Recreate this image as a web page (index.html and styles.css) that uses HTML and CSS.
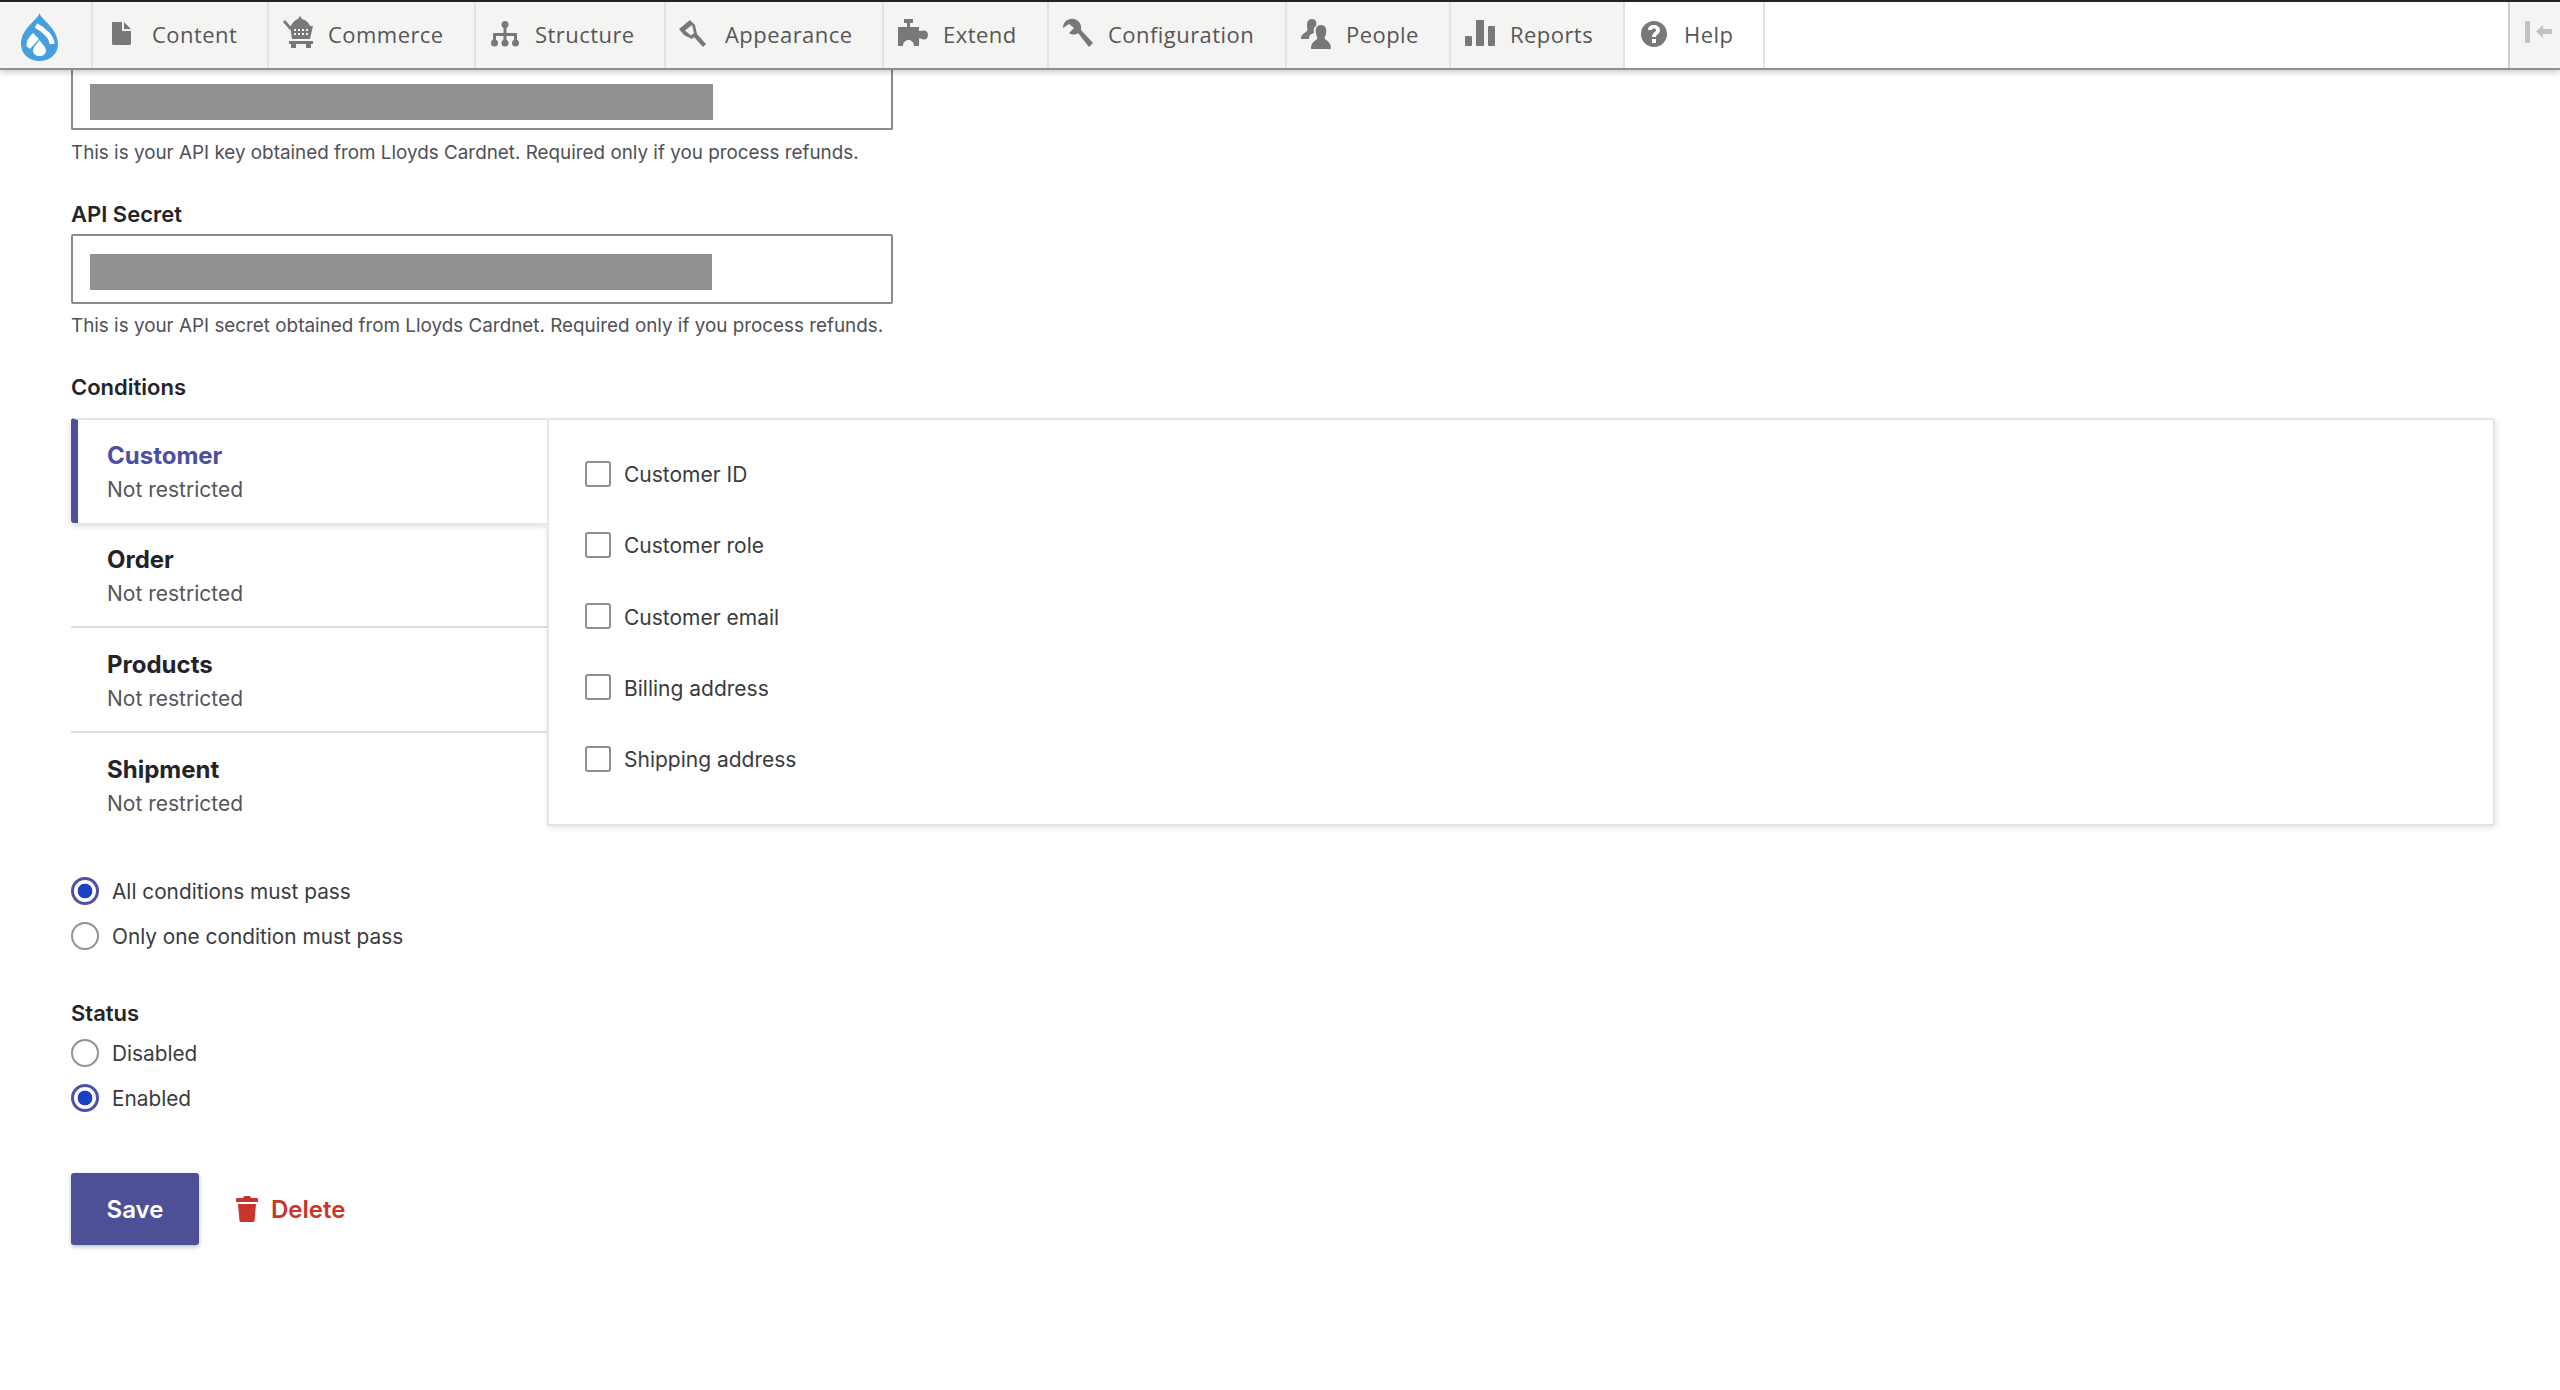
FILE: index.html
```html
<!DOCTYPE html>
<html lang="en">
<head>
<meta charset="utf-8">
<title>Payment gateway</title>
<link rel="stylesheet" href="styles.css">
</head>
<body>
<nav class="toolbar">
  <a class="logo"><svg width="37" height="48" viewBox="0 0 37 48"><path class="logo-drop" d="M18.500 0C20 7 37 15 37 31 37 41 29 48 18.500 48 8 48 0 41 0 31 0 15 17 7 18.500 0Z"/><path class="logo-line" d="M15 12.500C24 17 31 25 31 31"/><path class="logo-inner" d="M12 20L18 26 9 36 5.500 33C5 28 8 24 12 20Z"/><path class="logo-inner" d="M18.500 27C21 31 25 34 25 37.500 25 41 22 43 18.500 43 15 43 12 41 12 37.500 12 34 16 31 18.500 27Z"/></svg></a>
  <a class="tab tab-content"><svg class="ico" viewBox="0 0 30 30"><path d="M5 3H15V12H24V24.500Q24 26 22.500 26H6.500Q5 26 5 24.500ZM17 3L24 10H17Z"/></svg>Content</a>
  <a class="tab tab-commerce"><svg class="ico" viewBox="0 0 30 30"><path fill-rule="evenodd" d="M17 -3L19 0C23 1 26 4 27 7H8C9 4 12 1 15 0ZM7 7H30L27 20H9ZM11 10V12H13V10ZM15 10V12H17V10ZM19 10V12H21V10ZM23 10V12H25V10ZM11 14V16H13V14ZM15 14V16H17V14ZM19 14V16H21V14ZM23 14V16H25V14Z"/><path d="M0 3L2 1 9 9 7 11Z"/><path d="M6 22H30V25H6Z"/><path d="M8 25H13V29H8ZM23 25H28V29H23Z"/></svg>Commerce</a>
  <a class="tab tab-structure"><svg class="ico" viewBox="0 0 30 30"><circle cx="15" cy="5.500" r="3.500"/><path d="M13.500 8H16.500V14H27V22H24V17H16.500V22H13.500V17H6V22H3V14H13.500Z"/><circle cx="4.500" cy="24" r="3.500"/><circle cx="15" cy="24" r="3.500"/><circle cx="25.500" cy="24" r="3.500"/></svg>Structure</a>
  <a class="tab tab-appearance"><svg class="ico" viewBox="0 0 30 30"><path fill-rule="evenodd" d="M-1 10L10 1 15 6 17 15 12 20 4 16ZM5 11.500L12 6 14 14 11 16.500Z"/><path d="M16 14L26 25 23 28 13 17Z"/></svg>Appearance</a>
  <a class="tab tab-extend"><svg class="ico" viewBox="0 0 30 30"><path d="M6 0H15V4H12V8H21V12H23C24 11 25 11.500 26 11.500 28.500 11.500 30 13.500 30 16 30 18.500 28.500 20.500 26 20.500 25 20.500 24 20 23 19.500H21V27H16C16 23.500 13.500 21 10.500 21 7.500 21 5 23.500 5 27H0V8H9V4H6Z"/></svg>Extend</a>
  <a class="tab tab-config"><svg class="ico" viewBox="0 0 30 30"><path d="M11 0C5 -1 0 3 0 9L6 5 11 9 6 14C9 16 13 16 15 14L26 28 30 24 18 11C19 6 16 1 11 0Z"/></svg>Configuration</a>
  <a class="tab tab-people"><svg class="ico" viewBox="0 0 30 30"><path d="M11 0C15 0 16 3 15 7 13 8 12 11 13 14 9 15 8 17 8 20H0C0 15 4 14 6 12 7 11 6 9 6 6 6 2 8 0 11 0Z"/><path d="M20 6C24 6 26 9 25 14 25 17 23 18 24 20 26 22 30 23 30 30H10C10 23 14 22 16 20 17 18 15 17 15 14 14 9 16 6 20 6Z"/></svg>People</a>
  <a class="tab tab-reports"><svg class="ico" viewBox="0 0 30 30"><rect x="0" y="17" width="7" height="10" rx="1"/><rect x="11" y="1" width="8" height="26" rx="1"/><rect x="23" y="7" width="7" height="20" rx="1"/></svg>Reports</a>
  <a class="tab tab-help"><svg class="ico" viewBox="0 0 30 30"><path fill-rule="evenodd" d="M15 2A13 13 0 1 1 15 28 13 13 0 0 1 15 2ZM13 20V24H17V20ZM15 6C11 6 9 8 9 11H13C13 10 14 9.500 15 9.500 16 9.500 17 10 17 11 17 13 13 14 13 18H17C17 15 21 15 21 11 21 8 18 6 15 6Z"/></svg>Help</a>
  <a class="toggle"><svg width="28" height="24" viewBox="0 0 28 24"><rect x="0" y="1" width="5" height="22" rx="1"/><path d="M11 11.500L18 5V9H27V14H18V18Z"/></svg></a>
</nav>

<main class="page">
  <section class="field field-key">
    <div class="input input-clipped"><span class="mask"></span></div>
    <p class="help">This is your API key obtained from Lloyds Cardnet. Required only if you process refunds.</p>
  </section>
  <section class="field field-secret">
    <h2 class="label">API Secret</h2>
    <div class="input"><span class="mask mask-secret"></span></div>
    <p class="help">This is your API secret obtained from Lloyds Cardnet. Required only if you process refunds.</p>
  </section>

  <h2 class="label conditions-title">Conditions</h2>
  <div class="conditions">
    <ul class="vtabs">
      <li class="vtab vtab-active"><strong>Customer</strong><span>Not restricted</span></li>
      <li class="vtab"><strong>Order</strong><span>Not restricted</span></li>
      <li class="vtab"><strong>Products</strong><span>Not restricted</span></li>
      <li class="vtab vtab-last"><strong>Shipment</strong><span>Not restricted</span></li>
    </ul>
    <div class="pane">
      <label class="check"><i class="box"></i><span class="check-text">Customer ID</span></label>
      <label class="check"><i class="box"></i><span class="check-text">Customer role</span></label>
      <label class="check"><i class="box"></i><span class="check-text">Customer email</span></label>
      <label class="check"><i class="box"></i><span class="check-text">Billing address</span></label>
      <label class="check"><i class="box"></i><span class="check-text">Shipping address</span></label>
    </div>
  </div>

  <div class="radios radios-logic">
    <label class="radio"><i class="dot dot-on"></i><span class="check-text">All conditions must pass</span></label>
    <label class="radio"><i class="dot"></i><span class="check-text">Only one condition must pass</span></label>
  </div>

  <h2 class="label status-title">Status</h2>
  <div class="radios">
    <label class="radio"><i class="dot"></i><span class="check-text">Disabled</span></label>
    <label class="radio"><i class="dot dot-on"></i><span class="check-text">Enabled</span></label>
  </div>

  <div class="actions">
    <button class="save">Save</button>
    <a class="delete"><svg width="22" height="26" viewBox="0 0 22 26"><path d="M8 0H14L15 2H21Q22 2 22 3V6H0V3Q0 2 1 2H7ZM2 8H20L18.500 25Q18.500 26 17 26H5Q3.500 26 3.500 25Z"/></svg>Delete</a>
  </div>
</main>
</body>
</html>
```
FILE: styles.css
```css
* { box-sizing: border-box; }
html, body { margin: 0; background: #fff; }
body { height: 1390px; overflow: hidden; font-family: Inter, "Liberation Sans", sans-serif; color: #232429; }

.toolbar { position: relative; z-index: 2; display: flex; height: 68px; background: #fff; border-top: 2px solid #232323; box-shadow: 0 2px 0 #8f8f8f, 0 4px 6px rgba(0,0,0,.22); font-family: "Open Sans", "DejaVu Sans", sans-serif; }
.logo { width: 93px; padding: 11px 0 0 21px; background: #f4f4f3; border-right: 2px solid #e2e2e0; }
.logo-drop { fill: #479fdd; }
.logo-line { fill: none; stroke: #fff; stroke-width: 5; }
.logo-inner { fill: #fff; }
.tab { display: flex; flex: none; align-items: center; gap: 15px; padding: 0 0 2px 14px; background: #f4f4f3; border-right: 2px solid #e2e2e0; color: #565656; font-size: 22px; letter-spacing: .45px; white-space: nowrap; }
.tab-content { width: 176px; }
.tab-commerce { width: 207px; }
.tab-structure { width: 190px; }
.tab-appearance { width: 218px; }
.tab-extend { width: 165px; }
.tab-config { width: 238px; }
.tab-people { width: 164px; }
.tab-reports { width: 174px; }
.tab-help { width: 140px; background: #fff; }
.ico { width: 30px; height: 30px; flex: none; fill: #787878; overflow: visible; }
.toggle { margin-left: auto; width: 52px; padding: 18px 0 0 15px; background: #f4f4f3; border-left: 2px solid #cfcfcf; fill: #c2c2c2; }

.page { padding: 0 65px 0 71px; }
.field { width: 822px; }
.input { height: 70px; padding: 18px 17px; border: 2px solid #8b8b8b; border-radius: 2px; }
.input-clipped { height: 62px; padding-top: 16px; border-top: 0; border-radius: 0 0 2px 2px; }
.mask { display: block; width: 623px; height: 36px; background: #919191; }
.mask-secret { width: 622px; }
.help { margin: 10px 0 0; font-size: 18.850px; line-height: 24px; white-space: nowrap; color: #4f5055; }
.field-key .help { margin-top: 11px; }
.label { margin: 0; font-size: 22px; line-height: 28px; font-weight: 600; color: #232429; }
.field-secret { margin-top: 35px; }
.field-secret .label { margin-bottom: 6px; }
.conditions-title { margin-top: 35px; }

.conditions { display: flex; margin-top: 17px; width: 2424px; height: 408px; }
.vtabs { list-style: none; margin: 0; padding: 0; width: 476px; flex: none; }
.vtab { display: flex; flex-direction: column; gap: 7px; height: 105px; padding: 22px 0 0 36px; border-bottom: 2px solid #dedee3; }
.vtab strong { font-size: 24px; line-height: 29px; font-weight: 700; color: #232429; }
.vtab span { font-size: 21px; line-height: 26px; color: #55565b; }
.vtab-active { position: relative; z-index: 1; padding: 21px 0 0 29px; background: #fff; border-left: 7px solid #4f4f9f; border-top: 2px solid #e2e2e8; border-bottom: 0; border-radius: 3px 0 0 3px; box-shadow: 0 3px 6px rgba(60,60,80,.18); clip-path: inset(0 0 -10px -10px); }
.vtab-active strong { color: #4c4f9f; }
.vtab-last { border-bottom: 0; }

.pane { flex: 1; display: flex; flex-direction: column; height: 408px; padding: 18px 36px 0; background: #fff; border: 2px solid #e2e2e8; border-left-color: #e6e6ea; border-radius: 0 3px 3px 0; box-shadow: 1px 2px 6px rgba(60,60,80,.14); }
.check { display: flex; align-items: center; gap: 13px; height: 71.250px; font-size: 21px; color: #3a3b40; }
.check-text { padding-top: 2px; }
.box { width: 26px; height: 26px; flex: none; border: 2px solid #8f8f93; border-radius: 3px; background: #fff; }

.radios { display: flex; flex-direction: column; }
.radios-logic { margin-top: 42px; }
.radio { display: flex; align-items: center; gap: 13px; height: 45px; font-size: 20.800px; color: #3a3b40; }
.dot { width: 28px; height: 28px; flex: none; border: 2px solid #929296; border-radius: 50%; background: #fff; }
.dot-on { border: 3px solid #5152a4; background: radial-gradient(circle, #1a41c8 0 7px, #fff 7.700px); }
.status-title { margin-top: 41px; margin-bottom: 3px; }

.actions { display: flex; align-items: center; gap: 37px; margin-top: 53px; }
.save { width: 128px; height: 72px; border: 0; border-radius: 3px; background: #4d4f97; color: #fff; font: 600 24px Inter, sans-serif; box-shadow: 0 2px 4px rgba(40,40,80,.3); }
.delete { display: flex; align-items: center; gap: 13px; color: #c8352c; font-size: 24px; font-weight: 600; fill: #c8352c; }
```
